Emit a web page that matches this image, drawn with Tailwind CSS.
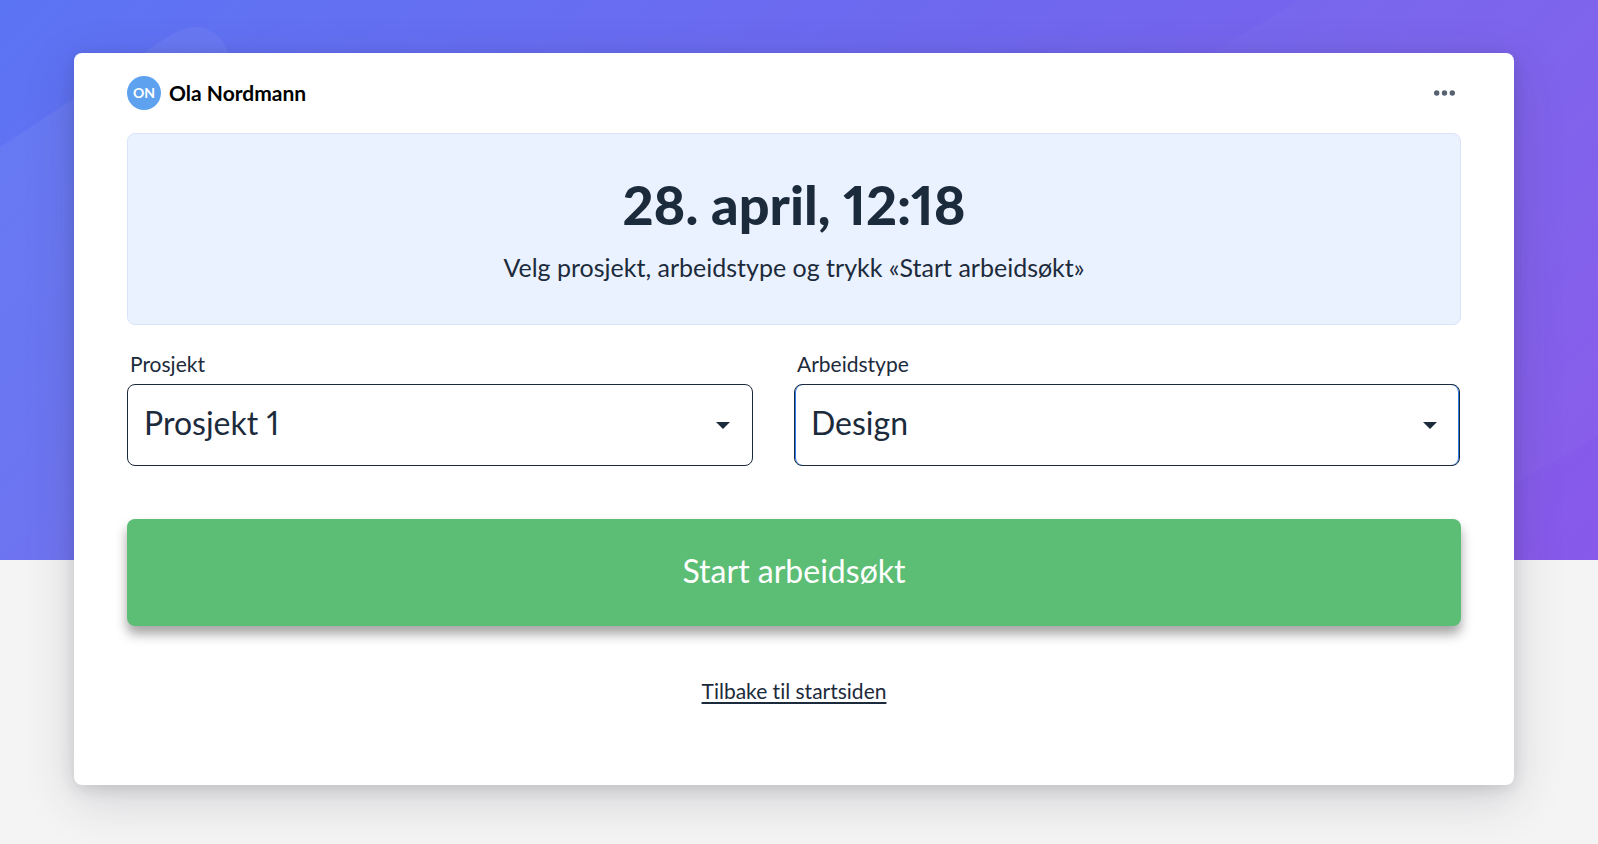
<!doctype html>
<html lang="no">

<head>
  <meta charset="UTF-8">
  <meta content="width=device-width, initial-scale=1.0" name="viewport">
  <script src="https://cdn.jsdelivr.net/npm/@tailwindcss/browser@4"></script>
  <title>Start arbeidsøkt</title>
</head>

<body
  class="relative min-h-screen overflow-x-hidden bg-[#f4f4f4] font-['Lato','Open_Sans',sans-serif] text-[#1c2b3c] proportional-nums [font-variant-ligatures:none]">
  <!-- backdrop -->
  <div class="absolute inset-x-0 top-0 h-[560px] overflow-hidden bg-linear-135 from-[#5b74f4] via-[#7067ee] to-[#8859ea]">
    <svg class="h-full w-full" viewBox="0 0 1598 560" preserveAspectRatio="none" aria-hidden="true">
      <path d="M0 147 L166 38 Q194 18 216 34 Q228 44 230 62 L230 560 L0 560 Z" fill="#fff" fill-opacity=".05" />
      <path d="M1210 53 L1300 0 H1598 V436 L1400 549 Z" fill="#fff" fill-opacity=".02" />
    </svg>
  </div>

  <main
    class="relative mt-[53px] mr-[84px] mb-[58px] ml-[74px] rounded-lg bg-white px-[53px] pt-6 pb-[79px] shadow-[0_14px_50px_rgba(50,50,80,0.18),0_4px_16px_rgba(0,0,0,0.12)]">
    <header class="flex h-8 items-center justify-between">
      <div class="flex items-center gap-2">
        <span
          class="flex size-[34px] items-center justify-center rounded-full bg-[#5ea2ef] text-sm font-bold text-white">ON</span>
        <span class="text-[21px] font-bold text-black">Ola Nordmann</span>
      </div>
      <button class="p-1.5" type="button" aria-label="Meny">
        <svg class="h-6 w-[21px] fill-[#566171]" viewBox="0 0 21 24" aria-hidden="true">
          <circle cx="2.7" cy="12" r="2.7" />
          <circle cx="10.5" cy="12" r="2.7" />
          <circle cx="18.3" cy="12" r="2.7" />
        </svg>
      </button>
    </header>

    <section class="mt-6 flex h-[192px] flex-col items-center rounded-lg border border-[#dae3fa] bg-[#ebf2ff] pt-10">
      <h1 class="text-[54px] leading-[62px] font-black">28. april, 12:18</h1>
      <p class="mt-[15px] text-[25px] leading-8">Velg prosjekt, arbeidstype og trykk «Start arbeidsøkt»</p>
    </section>

    <form>
      <div class="mt-6 flex">
        <div class="w-1/2 pr-[41px]">
          <label class="block pl-[3px] text-[21px] leading-[30px]" for="prosjekt">Prosjekt</label>
          <div class="relative mt-[5px]">
            <select
              class="h-[82px] w-full appearance-none rounded-lg border border-[#1c2b3c] bg-white px-4 pb-1 text-[32px] proportional-nums"
              id="prosjekt">
              <option>Prosjekt 1</option>
            </select>
            <svg class="pointer-events-none absolute top-[38px] right-[23px] h-[7px] w-[14px] fill-[#1c2b3c]"
              viewBox="0 0 14 7" aria-hidden="true">
              <path d="M0 0h14L7 7z" />
            </svg>
          </div>
        </div>
        <div class="w-1/2 pr-px">
          <label class="block pl-[3px] text-[21px] leading-[30px]" for="arbeidstype">Arbeidstype</label>
          <div class="relative mt-[5px]">
            <select
              class="h-[82px] w-full appearance-none rounded-lg border border-[#1c2b3c] bg-white px-4 pb-1 text-[32px] shadow-[inset_1px_0_#2f7bf0,inset_-1px_0_#2f7bf0]"
              id="arbeidstype">
              <option>Design</option>
            </select>
            <svg class="pointer-events-none absolute top-[38px] right-[23px] h-[7px] w-[14px] fill-[#1c2b3c]"
              viewBox="0 0 14 7" aria-hidden="true">
              <path d="M0 0h14L7 7z" />
            </svg>
          </div>
        </div>
      </div>

      <button
        class="mt-[53px] h-[107px] w-full rounded-lg bg-[#5cbd75] pb-1 text-[32px] text-white shadow-[0_8px_12px_rgba(0,0,0,0.36)]"
        type="submit">Start arbeidsøkt</button>
    </form>

    <div class="mt-[50px] text-center text-[21px] leading-[30px]">
      <a class="underline decoration-2 underline-offset-3" href="#">Tilbake til startsiden</a>
    </div>
  </main>
</body>

</html>
